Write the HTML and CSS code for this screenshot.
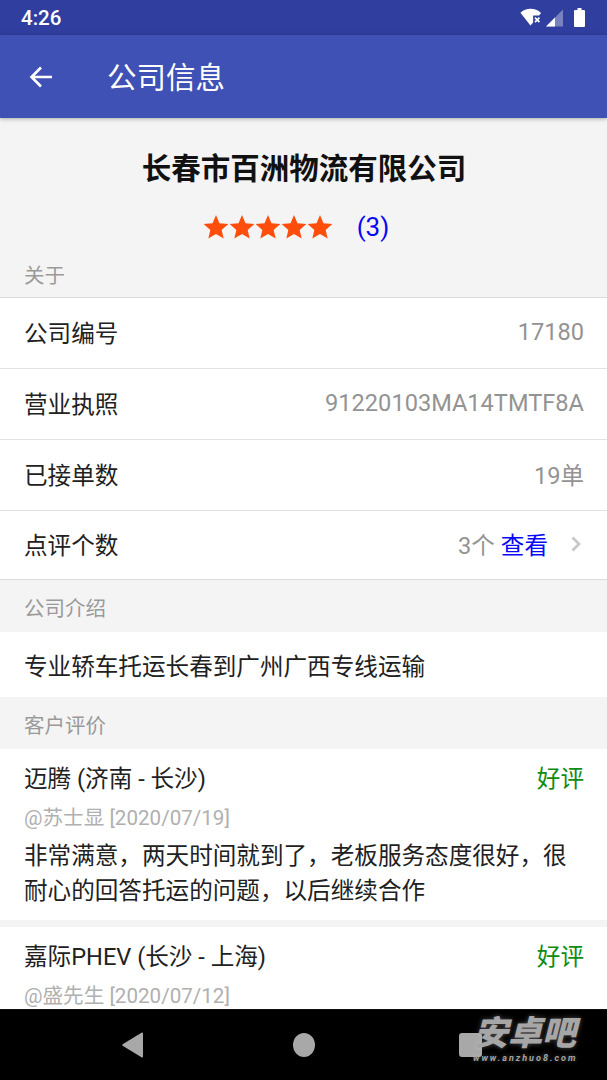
FILE: index.html
```html
<!DOCTYPE html>
<html lang="zh-CN">
<head>
    <meta charset="UTF-8">
    <title>公司信息</title>
    <meta name="viewport" content="width=device-width, initial-scale=1.0">
    <link rel="stylesheet" href="styles.css">
</head>
<body>
    <div class="status-bar">
        <span class="clock">4:26</span>
        <div class="status-icons">
            <svg class="wifi" width="22" height="19" viewBox="0 0 20 18">
                <path d="M0 4.500C2.500 2 6 .8 9.500.8S17 2 19.500 4.700L17.600 7H12v6.800L9.500 16.500z" fill="#fff"/>
                <path d="M13.800 9.200l4.200 4.200m0-4.200l-4.200 4.200" stroke="#fff" stroke-width="1.600"/>
            </svg>
            <svg class="signal" width="17" height="18" viewBox="0 0 17 18">
                <path d="M0 17.500L17 .5v17z" fill="#fff" fill-opacity=".35"/>
                <path d="M0 17.500l9-9v9z" fill="#fff"/>
            </svg>
            <svg class="battery" width="11" height="19" viewBox="0 0 11 19">
                <path d="M3.500 0h4v2H10a1 1 0 0 1 1 1v15a1 1 0 0 1-1 1H1a1 1 0 0 1-1-1V3a1 1 0 0 1 1-1h2.500z" fill="#fff"/>
            </svg>
        </div>
    </div>
    <header class="toolbar">
        <svg class="back" width="26" height="26" viewBox="0 0 26 26">
            <path d="M24 13H4M13 3.500L3.500 13l9.500 9.500" fill="none" stroke="#fff" stroke-width="2.600"/>
        </svg>
        <h1>公司信息</h1>
    </header>
    <main class="content">
        <section class="company">
            <h2>长春市百洲物流有限公司</h2>
            <div class="rating">
                <span class="stars">
                    <svg width="26" height="26" viewBox="0 0 24 24"><path d="M12 1l3.200 7.600 8.200.7-6.200 5.400 1.900 8L12 18.400l-7.100 4.300 1.900-8L.6 9.300l8.200-.7z"/></svg>
                    <svg width="26" height="26" viewBox="0 0 24 24"><path d="M12 1l3.200 7.600 8.200.7-6.200 5.400 1.900 8L12 18.400l-7.100 4.300 1.900-8L.6 9.300l8.200-.7z"/></svg>
                    <svg width="26" height="26" viewBox="0 0 24 24"><path d="M12 1l3.200 7.600 8.200.7-6.200 5.400 1.900 8L12 18.400l-7.100 4.300 1.900-8L.6 9.300l8.200-.7z"/></svg>
                    <svg width="26" height="26" viewBox="0 0 24 24"><path d="M12 1l3.200 7.600 8.200.7-6.200 5.400 1.900 8L12 18.400l-7.100 4.300 1.900-8L.6 9.300l8.200-.7z"/></svg>
                    <svg width="26" height="26" viewBox="0 0 24 24"><path d="M12 1l3.200 7.600 8.200.7-6.200 5.400 1.900 8L12 18.400l-7.100 4.300 1.900-8L.6 9.300l8.200-.7z"/></svg>
                </span>
                <span class="count">(3)</span>
            </div>
        </section>
        <div class="section-title about-title">关于</div>
        <div class="list">
            <div class="row"><span>公司编号</span><span class="value">17180</span></div>
            <div class="row"><span>营业执照</span><span class="value">91220103MA14TMTF8A</span></div>
            <div class="row"><span>已接单数</span><span class="value">19单</span></div>
            <div class="row">
                <span>点评个数</span>
                <span class="value">3个 <a class="link">查看</a>
                    <svg class="chevron" width="10" height="16" viewBox="0 0 10 16"><path d="M1.500 1.500L8 8l-6.500 6.500" fill="none" stroke="#c8c8c8" stroke-width="2.800"/></svg>
                </span>
            </div>
        </div>
        <div class="section-title">公司介绍</div>
        <div class="intro">专业轿车托运长春到广州广西专线运输</div>
        <div class="section-title">客户评价</div>
        <article class="review">
            <div class="review-head"><span>迈腾 (济南 - 长沙)</span><span class="good">好评</span></div>
            <div class="meta">@苏士显 [2020/07/19]</div>
            <p>非常满意，两天时间就到了，老板服务态度很好，很耐心的回答托运的问题，以后继续合作</p>
        </article>
        <article class="review">
            <div class="review-head"><span>嘉际PHEV (长沙 - 上海)</span><span class="good">好评</span></div>
            <div class="meta">@盛先生 [2020/07/12]</div>
        </article>
    </main>
    <nav class="nav-bar">
        <svg width="22" height="26" viewBox="0 0 22 26"><path d="M21 1.500v23a1 1 0 0 1-1.500.8L1 14a1.200 1.200 0 0 1 0-2L19.500.7A1 1 0 0 1 21 1.500z" fill="#a8a8a8"/></svg>
        <span class="nav-home"></span>
        <span class="nav-recent"></span>
    </nav>
    <div class="watermark">
        <div class="wm-name">安卓吧</div>
        <div class="wm-url">www.anzhuo8.com</div>
    </div>
</body>
</html>
```

FILE: styles.css
```css
html { box-sizing: border-box; }
*, *::before, *::after { box-sizing: inherit; }
body {
    margin: 0;
    height: 1080px;
    overflow: hidden;
    display: flex;
    flex-direction: column;
    position: relative;
    background: #f4f4f4;
    color: #212121;
    font-family: Roboto, 'Noto Sans CJK SC', sans-serif;
    font-size: 23.6px;
}
.status-bar {
    flex: none;
    height: 35px;
    padding: 0 22px 0 21px;
    display: flex;
    align-items: center;
    justify-content: space-between;
    background: #303f9f;
    color: #fff;
}
.clock {
    font-size: 20.5px;
    font-weight: 500;
}
.status-icons {
    display: flex;
    align-items: center;
}
.signal { margin-left: 4px; }
.battery { margin-left: 11px; }
.toolbar {
    flex: none;
    height: 83px;
    padding: 0 0 0 28px;
    display: flex;
    align-items: center;
    background: #3f51b5;
    box-shadow: 0 1px 4px rgba(0,0,0,0.3);
    position: relative;
}
.toolbar h1 {
    margin: 0 0 0 53px;
    padding-bottom: 4px;
    font-size: 29.5px;
    font-weight: 400;
    color: #fff;
}
.content {
    flex: 1 1 0;
    min-height: 0;
    overflow: hidden;
}
.company {
    padding: 28px 0 0 1px;
    text-align: center;
}
.company h2 {
    margin: 0;
    font-size: 29.5px;
    line-height: 46px;
    font-weight: 700;
    color: #111;
}
.rating {
    margin: 18px 0 7px;
    height: 34px;
    display: flex;
    align-items: center;
    justify-content: center;
    padding-right: 16px;
}
.stars {
    display: flex;
    line-height: 0;
}
.stars svg { fill: #ff4e0b; }
.count {
    margin-left: 24px;
    color: #0808f5;
    font-size: 26px;
}
.section-title {
    height: 52px;
    padding: 2px 24px 0;
    display: flex;
    align-items: center;
    font-size: 20.5px;
    color: #9a9a9a;
}
.about-title {
    height: 46px;
    padding: 0 24px 1px;
}
.list {
    background: #fff;
    border-top: 1px solid #dcdcdc;
    border-bottom: 1px solid #dcdcdc;
}
.row {
    height: 71px;
    padding: 0 23px 3px 24px;
    display: flex;
    align-items: center;
    justify-content: space-between;
    border-bottom: 1px solid #e2e2e2;
}
.row:last-child {
    height: 68px;
    border-bottom: none;
}
.value {
    display: flex;
    align-items: center;
    color: #939393;
}
.link {
    margin-left: 6px;
    color: #0808f5;
}
.chevron { margin-left: 23px; margin-right: 3px; }
.intro {
    height: 65px;
    padding: 0 24px;
    display: flex;
    align-items: center;
    background: #fff;
}
.review {
    padding: 12px 23px 11px 24px;
    background: #fff;
    margin-bottom: 7px;
}
.review-head {
    display: flex;
    justify-content: space-between;
    line-height: 36px;
}
.good { color: #118c11; }
.meta {
    margin-top: 6px;
    font-size: 20.6px;
    line-height: 30px;
    color: #b0b0b0;
}
.review p {
    margin: 6px 0 0;
    line-height: 35px;
}
.nav-bar {
    flex: none;
    height: 71px;
    padding-left: 122px;
    display: flex;
    align-items: center;
    background: #000;
    border-top: 1px solid #111;
}
.nav-home {
    width: 22px;
    height: 24px;
    margin-left: 149px;
    border-radius: 50%;
    background: #a8a8a8;
}
.nav-recent {
    width: 23px;
    height: 24px;
    margin-left: 144px;
    border-radius: 3px;
    background: #a8a8a8;
}
.watermark {
    position: absolute;
    left: 473px;
    top: 1013px;
    width: 104px;
    text-align: center;
    color: #a6a6a6;
    text-shadow: 0 0 5px rgba(255,255,255,0.3);
}
.wm-name {
    font-size: 34px;
    line-height: 40px;
    font-weight: 900;
    font-style: italic;
    white-space: nowrap;
}
.wm-url {
    font-size: 9px;
    line-height: 10px;
    font-weight: 700;
    font-style: italic;
    letter-spacing: 2px;
    white-space: nowrap;
}
```
